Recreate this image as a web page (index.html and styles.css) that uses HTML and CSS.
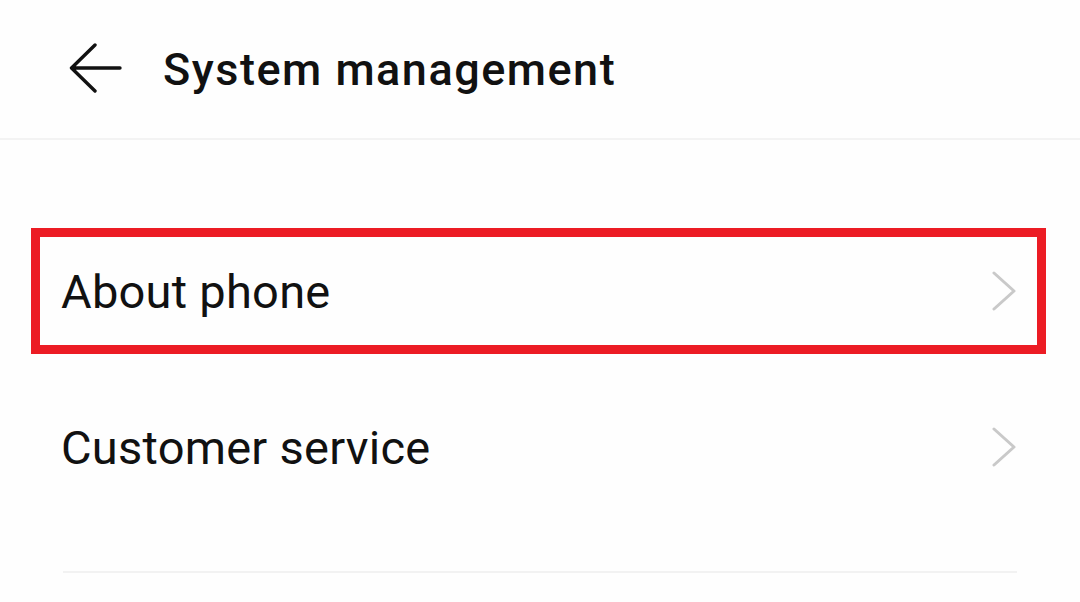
FILE: index.html
```html
<!DOCTYPE html>
<html lang="en">
<head>
<meta charset="utf-8">
<title>System management</title>
<link rel="stylesheet" href="styles.css">
</head>
<body>
<div class="screen">
  <header class="topbar">
    <svg class="back" width="54" height="50" viewBox="0 0 54 50" aria-hidden="true">
      <path d="M51 25 H3 M26 2 L2.5 25 L26 48" fill="none" stroke="#111" stroke-width="3.4" stroke-linecap="round" stroke-linejoin="round"/>
    </svg>
    <h1 class="title">System management</h1>
  </header>
  <main class="list">
    <div class="row">
      <span class="label">About phone</span>
      <svg class="chev" width="26" height="40" viewBox="0 0 26 40" aria-hidden="true">
        <path d="M3 2 L23 20 L3 38" fill="none" stroke="#c9c9c9" stroke-width="3" stroke-linecap="round" stroke-linejoin="round"/>
      </svg>
      <div class="highlight"></div>
    </div>
    <div class="row">
      <span class="label">Customer service</span>
      <svg class="chev" width="26" height="40" viewBox="0 0 26 40" aria-hidden="true">
        <path d="M3 2 L23 20 L3 38" fill="none" stroke="#c9c9c9" stroke-width="3" stroke-linecap="round" stroke-linejoin="round"/>
      </svg>
    </div>
    <div class="divider"></div>
  </main>
</div>
</body>
</html>
```
FILE: styles.css
```css
html, body {
  margin: 0;
  padding: 0;
  background: #fefefe;
}
.screen {
  width: 1080px;
  height: 602px;
  overflow: hidden;
  font-family: Roboto, "Liberation Sans", sans-serif;
  color: #111;
}
.topbar {
  height: 140px;
  display: flex;
  align-items: center;
  padding-left: 69px;
  gap: 40px;
  border-bottom: 2px solid #f3f3f3;
  box-sizing: border-box;
}
.back {
  display: block;
  margin-bottom: 2px;
}
.title {
  margin: 0;
  font-size: 45px;
  font-weight: 500;
  letter-spacing: 1.5px;
}
.list {
  padding-top: 73px;
}
.row {
  position: relative;
  height: 156px;
  display: flex;
  align-items: center;
  justify-content: space-between;
  padding: 0 63px 0 61px;
  box-sizing: border-box;
}
.label {
  font-size: 47px;
  font-weight: 400;
  letter-spacing: 0.25px;
  color: #111;
}
.chev {
  display: block;
}
.highlight {
  position: absolute;
  top: 15px;
  bottom: 15px;
  left: 31px;
  right: 34px;
  border: 9px solid #ec1c24;
}
.divider {
  margin: 46px 63px 0 63px;
  height: 2px;
  background: #f2f2f2;
}
```
